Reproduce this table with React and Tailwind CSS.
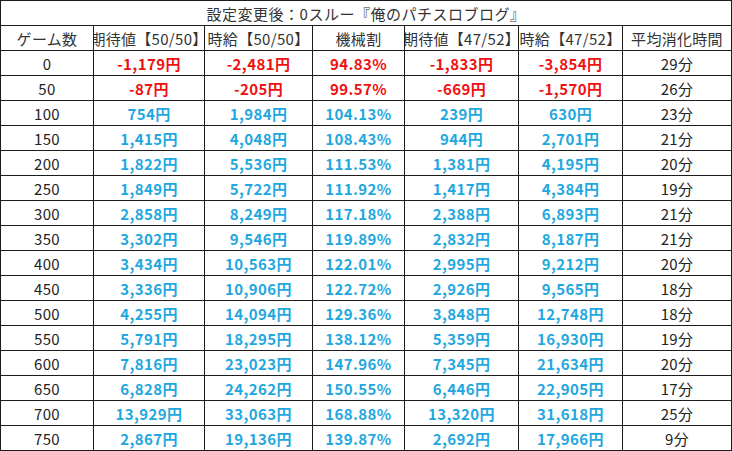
import React from "react";

const rows = [
  ["0", "-1,179円", "-2,481円", "94.83%", "-1,833円", "-3,854円", "29分", true],
  ["50", "-87円", "-205円", "99.57%", "-669円", "-1,570円", "26分", true],
  ["100", "754円", "1,984円", "104.13%", "239円", "630円", "23分"],
  ["150", "1,415円", "4,048円", "108.43%", "944円", "2,701円", "21分"],
  ["200", "1,822円", "5,536円", "111.53%", "1,381円", "4,195円", "20分"],
  ["250", "1,849円", "5,722円", "111.92%", "1,417円", "4,384円", "19分"],
  ["300", "2,858円", "8,249円", "117.18%", "2,388円", "6,893円", "21分"],
  ["350", "3,302円", "9,546円", "119.89%", "2,832円", "8,187円", "21分"],
  ["400", "3,434円", "10,563円", "122.01%", "2,995円", "9,212円", "20分"],
  ["450", "3,336円", "10,906円", "122.72%", "2,926円", "9,565円", "18分"],
  ["500", "4,255円", "14,094円", "129.36%", "3,848円", "12,748円", "18分"],
  ["550", "5,791円", "18,295円", "138.12%", "5,359円", "16,930円", "19分"],
  ["600", "7,816円", "23,023円", "147.96%", "7,345円", "21,634円", "20分"],
  ["650", "6,828円", "24,262円", "150.55%", "6,446円", "22,905円", "17分"],
  ["700", "13,929円", "33,063円", "168.88%", "13,320円", "31,618円", "25分"],
  ["750", "2,867円", "19,136円", "139.87%", "2,692円", "17,966円", "9分"],
];

const headers = ["ゲーム数", "期待値【50/50】", "時給【50/50】", "機械割", "期待値【47/52】", "時給【47/52】", "平均消化時間"];

function Cell({ children, className = "" }) {
  return (
    <div
      className={
        "h-[25px] border-r border-b border-[#1c1c1c] flex items-center justify-center whitespace-nowrap overflow-hidden text-[15px] leading-none " +
        className
      }
    >
      {children}
    </div>
  );
}

export default function App() {
  return (
    <div className="w-[732px] h-[451px] bg-white" style={{ fontFamily: '"Noto Sans CJK JP", "Noto Sans", sans-serif' }}>
      <div className="grid grid-cols-[93px_111px_108px_92px_114px_104px_109px] border-l border-t border-[#1c1c1c] w-[732px]">
        <Cell className="col-span-7 text-[#333333] tracking-[0.5px]">設定変更後：0スルー『俺のパチスロブログ』</Cell>
        {headers.map((h) => (
          <Cell key={h} className="text-[#333333] tracking-[0.3px]">{h}</Cell>
        ))}
        {rows.map((r) => {
          const color = r[7] ? "text-[#f01010]" : "text-[#1fa7e0]";
          return (
            <React.Fragment key={r[0]}>
              <Cell className="text-[#222222] tracking-[0.3px]">{r[0]}</Cell>
              {r.slice(1, 6).map((v, i) => (
                <Cell key={i} className={"font-bold tracking-[0.4px] " + color}>{v}</Cell>
              ))}
              <Cell className="text-[#222222] tracking-[0.3px]">{r[6]}</Cell>
            </React.Fragment>
          );
        })}
      </div>
    </div>
  );
}
